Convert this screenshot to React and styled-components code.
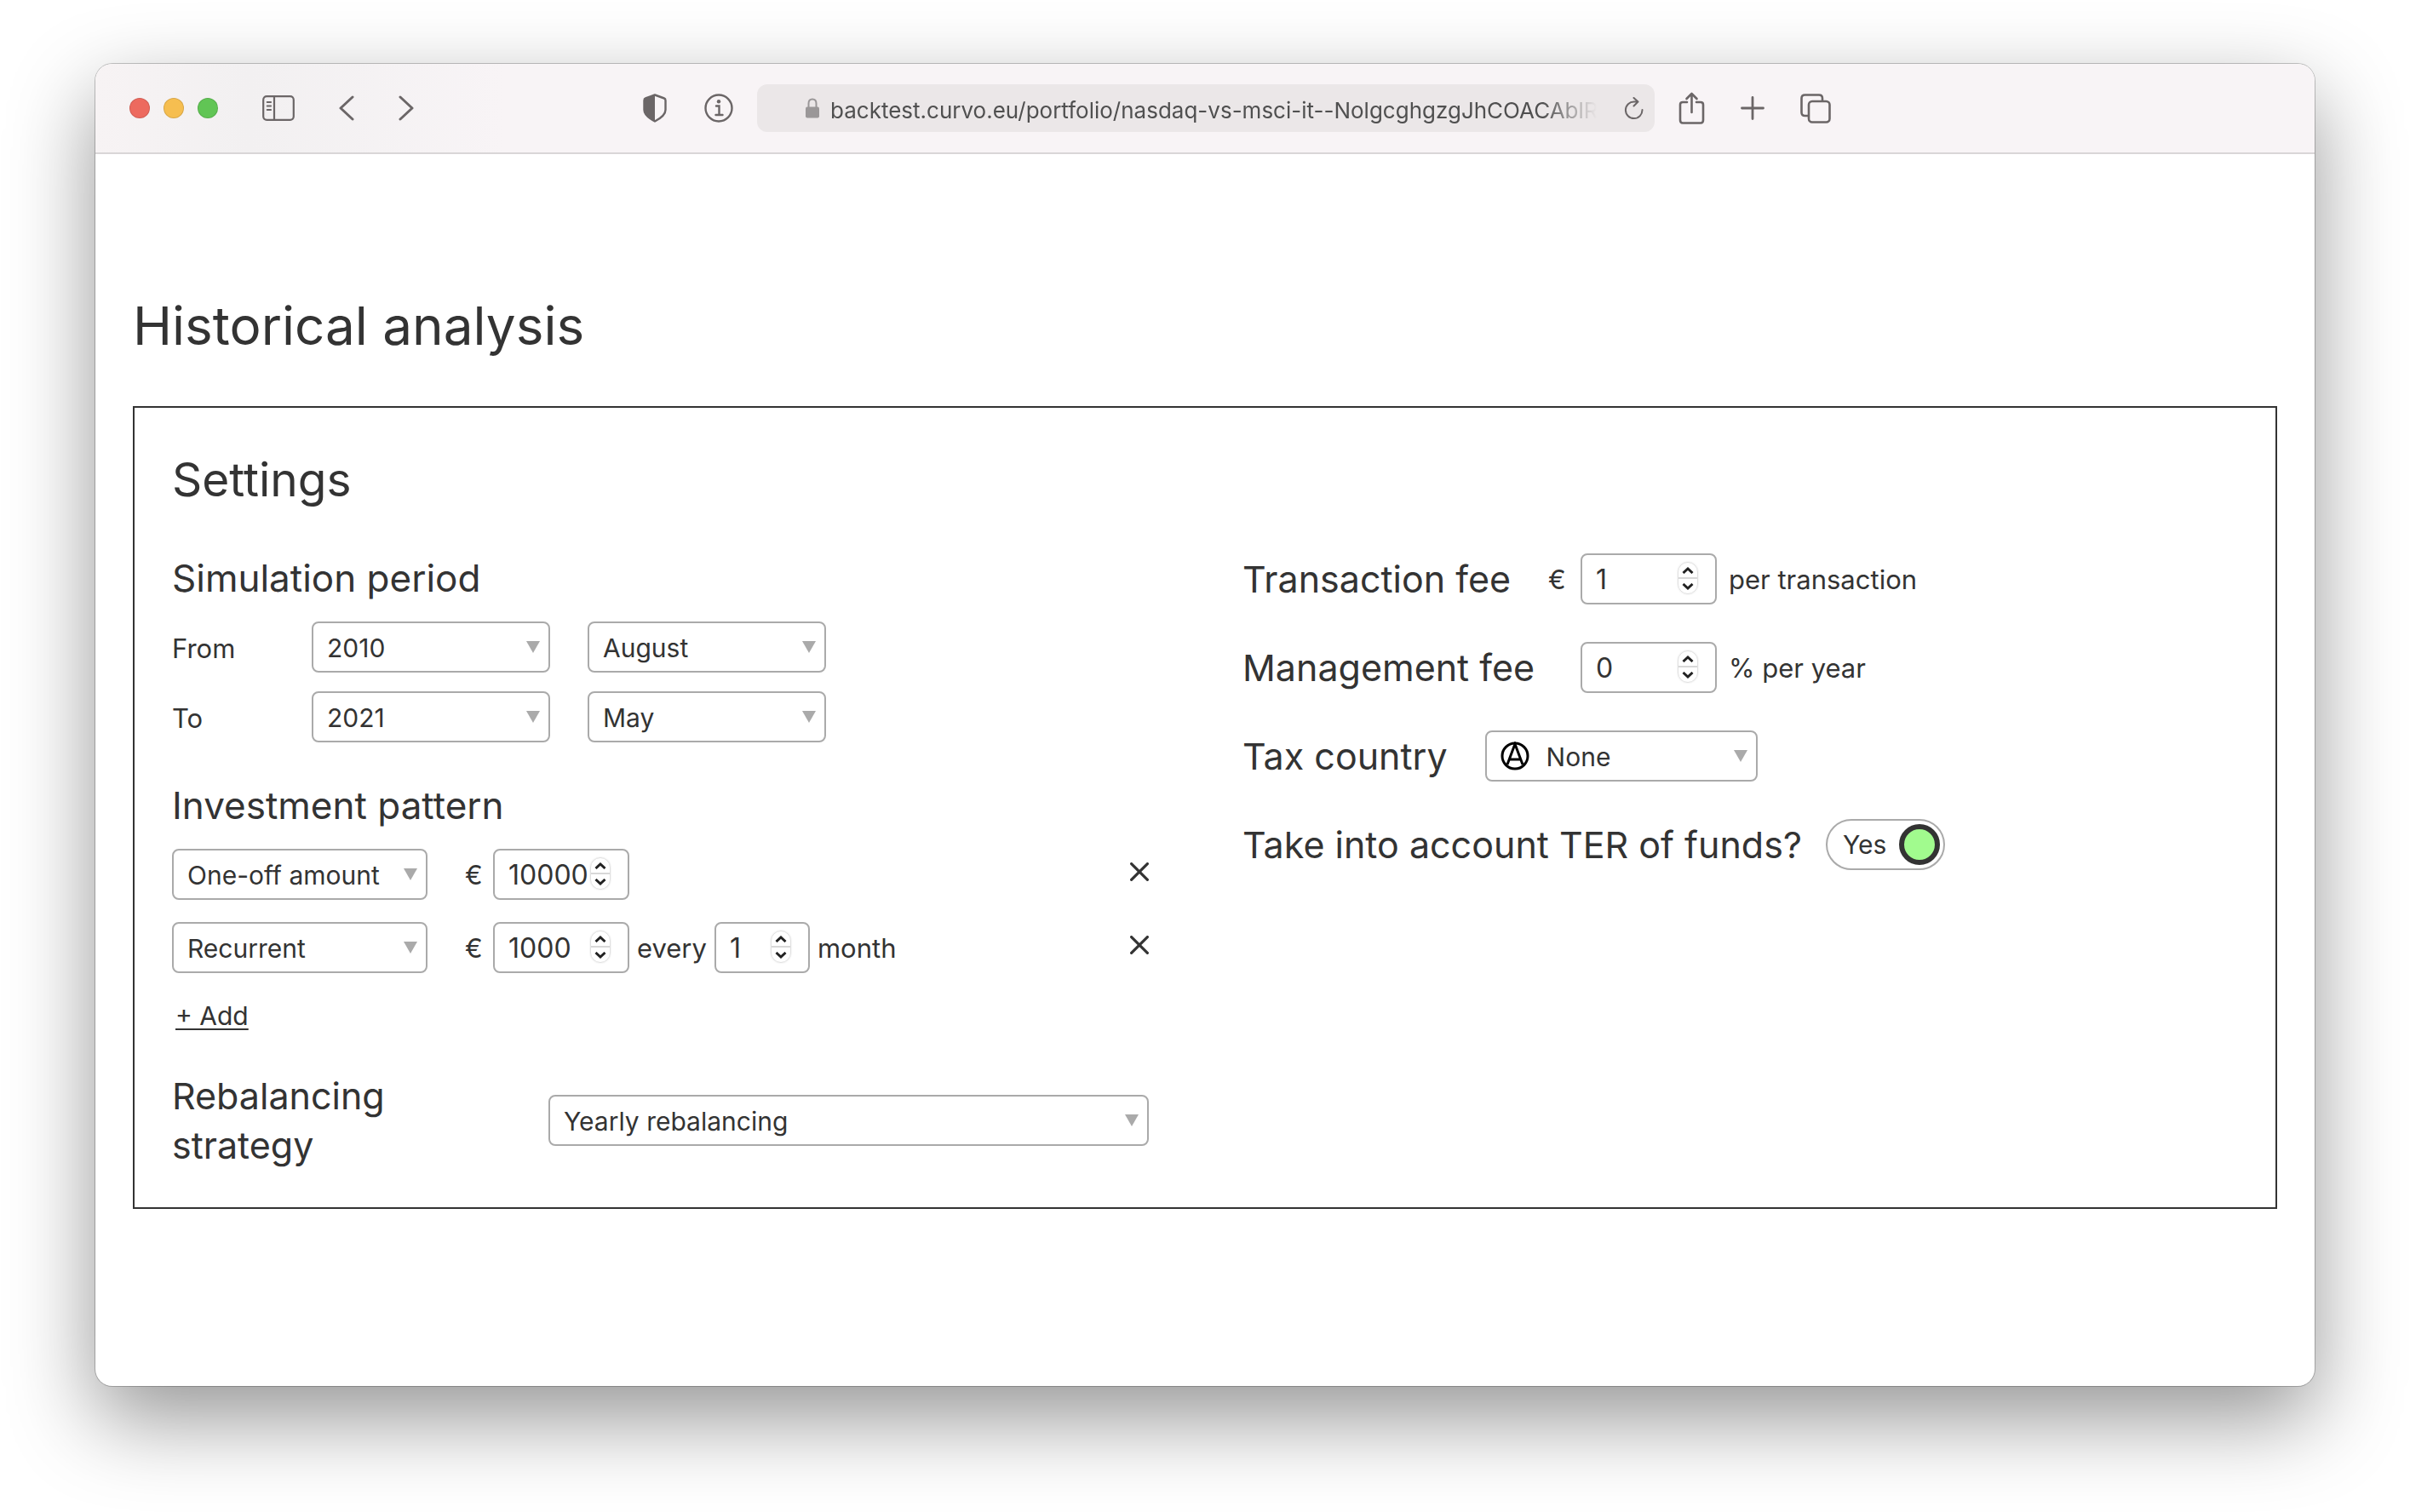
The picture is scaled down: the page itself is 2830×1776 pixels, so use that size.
import React, { useState } from "react";
import styled, { createGlobalStyle } from "styled-components";

const ink = "#333333";
const line = "#aaaaaa";
const chrome = "#6b6667";

const GlobalStyle = createGlobalStyle`
  *, *::before, *::after { box-sizing: border-box; }
  body {
    margin: 0;
    background: #ffffff;
    color: ${ink};
    font-family: Inter, "Liberation Sans", sans-serif;
  }
  button, input, select { font: inherit; color: inherit; margin: 0; }
  button { background: none; border: 0; padding: 0; cursor: pointer; }
`;

const Desktop = styled.div`
  padding: 75px 112px 148px;
  overflow: hidden;
`;

const Window = styled.div`
  border-radius: 20px;
  background: #ffffff;
  box-shadow: 0 0 0 1px rgba(0, 0, 0, 0.22), 0 38px 100px rgba(0, 0, 0, 0.42);
`;

const Toolbar = styled.header`
  display: flex;
  align-items: center;
  height: 106px;
  padding: 0 40px;
  border-bottom: 2px solid #d9d6d7;
  border-radius: 20px 20px 0 0;
  background: linear-gradient(90deg, #f7f3f4 0, #f2f0f1 180px, #f8f4f6 480px);
  color: ${chrome};
`;

const Lights = styled.div`
  display: flex;
  gap: 16px;
`;

const Light = styled.button`
  width: 24px;
  height: 24px;
  border-radius: 50%;
  border: 1px solid rgba(0, 0, 0, 0.12);
  background: ${(p) => p.$color};
`;

const ToolGroup = styled.div`
  display: flex;
  align-items: center;
  gap: ${(p) => p.$gap}px;
  margin-left: ${(p) => p.$before}px;
`;

const Tool = styled.button`
  display: flex;
  color: inherit;
`;

const AddressBar = styled.div`
  display: flex;
  align-items: center;
  flex: 0 1 1054px;
  height: 56px;
  margin-left: 28px;
  padding: 0 12px 0 56px;
  border-radius: 12px;
  background: #ebe7e8;
`;

const Address = styled.input`
  flex: 1;
  min-width: 0;
  height: 48px;
  margin: 0 32px 0 12px;
  padding: 4px 0 0;
  border: 0;
  background: none;
  color: #505050;
  font-size: 26px;
  mask-image: linear-gradient(90deg, #000 calc(100% - 64px), transparent);
`;

const Page = styled.main`
  padding: 160px 44px 208px;
`;

const Title = styled.h1`
  margin: 0 0 52px;
  font-size: 62px;
  font-weight: 400;
  line-height: 84px;
`;

const Panel = styled.section`
  padding: 48px 44px 44px;
  border: 2px solid ${ink};
`;

const PanelTitle = styled.h2`
  margin: 0 0 51px;
  font-size: 55px;
  font-weight: 400;
  line-height: 72px;
`;

const Columns = styled.div`
  display: grid;
  grid-template-columns: 1fr 1fr;
  gap: 88px;
`;

const Column = styled.div`
  display: flex;
  flex-direction: column;
  gap: ${(p) => p.$gap}px;
  padding-right: 22px;
`;

const Group = styled.section`
  display: flex;
  flex-direction: column;
`;

const GroupTitle = styled.h3`
  margin: 0 0 22px;
  font-size: 44px;
  font-weight: 400;
  line-height: 58px;
`;

const FieldLabel = styled.label`
  font-size: 43px;
  line-height: 58px;
`;

const PeriodGrid = styled.div`
  display: grid;
  grid-template-columns: 120px 280px 280px;
  gap: 22px 44px;
  align-items: center;
`;

const Small = styled.label`
  padding-top: 4px;
  font-size: 31px;
  line-height: 40px;
`;

const Text = styled.span`
  padding-top: 2px;
  font-size: 31px;
  line-height: 40px;
`;

const Currency = styled(Text)`
  width: 24px;
`;

const SelectBox = styled.div`
  display: grid;
  align-items: center;
  width: ${(p) => p.$width || "100%"};

  > * { grid-area: 1 / 1; }
  > svg { pointer-events: none; }
`;

const NativeSelect = styled.select`
  appearance: none;
  width: 100%;
  height: 60px;
  padding: 2px 32px 0 ${(p) => (p.$icon ? 70 : 16)}px;
  border: 2px solid ${line};
  border-radius: 8px;
  background: #ffffff;
  font-size: 30px;
`;

const Arrow = styled.svg`
  justify-self: end;
  margin-right: 12px;
`;

const NoCountry = styled.svg`
  margin-left: 18px;
`;

const NumberBox = styled.div`
  display: flex;
  align-items: center;
  justify-content: space-between;
  width: ${(p) => p.$width}px;
  height: 60px;
  padding: 0 20px 0 16px;
  border: 2px solid ${line};
  border-radius: 8px;
`;

const NumberInput = styled.input`
  appearance: textfield;
  flex: 1;
  min-width: 0;
  height: 48px;
  padding: 0;
  border: 0;
  outline: 0;
  background: none;
  font-size: 32px;

  &::-webkit-inner-spin-button { appearance: none; }
`;

const Stepper = styled.div`
  display: flex;
  flex-direction: column;
  width: 24px;
  height: 38px;
  margin-bottom: 2px;
  border: 1px solid #e0e0e0;
  border-radius: 12px;
  box-shadow: 0 0 2px rgba(0, 0, 0, 0.12);

  button {
    display: flex;
    flex: 1;
    align-items: center;
    justify-content: center;
    color: #222222;
  }
  button + button { border-top: 2px solid #d8d8d8; }
`;

const PatternList = styled.div`
  display: flex;
  flex-direction: column;
  gap: 26px;
`;

const PatternRow = styled.div`
  display: flex;
  align-items: center;
`;

const Inline = styled.div`
  display: flex;
  align-items: center;
  gap: ${(p) => p.$gap}px;
  margin-left: ${(p) => p.$before || 0}px;
`;

const Remove = styled.button`
  display: flex;
  margin: 0 0 6px auto;
`;

const AddLink = styled.a`
  align-self: flex-start;
  margin: 30px 0 0 4px;
  color: inherit;
  font-size: 30px;
  line-height: 40px;
  text-decoration: underline;
  text-decoration-thickness: 2px;
  text-underline-offset: 4px;
`;

const StrategyRow = styled.div`
  display: grid;
  grid-template-columns: 398px 1fr;
  gap: 44px;
  align-items: center;
`;

const FeeRow = styled.div`
  display: flex;
  align-items: center;
  min-height: 60px;
  gap: ${(p) => p.$gap}px;
`;

const Switch = styled.label`
  display: flex;
  align-items: center;
  justify-content: space-between;
  width: 140px;
  height: 60px;
  padding: 0 4px 0 18px;
  border: 2px solid ${line};
  border-radius: 30px;
  font-size: 30px;
  cursor: pointer;
`;

const Knob = styled.input`
  appearance: none;
  width: 48px;
  height: 48px;
  border: 6px solid ${ink};
  border-radius: 50%;
  background: #ffffff;

  &:checked { background: #a1fb8e; }
`;

function Select({ label, id, options, width, icon }) {
  return (
    <SelectBox $width={width}>
      <NativeSelect id={id} aria-label={label} $icon={Boolean(icon)}>
        {options.map((o) => (
          <option key={o}>{o}</option>
        ))}
      </NativeSelect>
      {icon}
      <Arrow width="16" height="14" viewBox="0 0 16 14" aria-hidden="true">
        <path d="M0 0H16L8 14Z" fill={line} />
      </Arrow>
    </SelectBox>
  );
}

function NumberField({ label, id, initial, width = 160 }) {
  const [value, setValue] = useState(initial);
  return (
    <NumberBox $width={width}>
      <NumberInput id={id} type="number" aria-label={label} value={value} onChange={(e) => setValue(e.target.value)} />
      <Stepper>
        <button type="button" aria-label="Increase" onClick={() => setValue(Number(value) + 1)}>
          <svg width="14" height="8" viewBox="0 0 14 8" fill="none" stroke="currentColor" strokeWidth="3">
            <path d="M1.5 7L7 2L12.5 7" />
          </svg>
        </button>
        <button type="button" aria-label="Decrease" onClick={() => setValue(Number(value) - 1)}>
          <svg width="14" height="8" viewBox="0 0 14 8" fill="none" stroke="currentColor" strokeWidth="3">
            <path d="M1.5 1L7 6L12.5 1" />
          </svg>
        </button>
      </Stepper>
    </NumberBox>
  );
}

function RemoveButton() {
  return (
    <Remove type="button" aria-label="Remove">
      <svg width="22" height="22" viewBox="0 0 22 22" stroke={ink} strokeWidth="3.2" strokeLinecap="round">
        <path d="M1.6 1.6L20.4 20.4M20.4 1.6L1.6 20.4" />
      </svg>
    </Remove>
  );
}

function BrowserToolbar() {
  return (
    <Toolbar>
      <Lights>
        <Light type="button" aria-label="Close" $color="#ed6a5f" />
        <Light type="button" aria-label="Minimize" $color="#f6be50" />
        <Light type="button" aria-label="Zoom" $color="#61c555" />
      </Lights>
      <ToolGroup $before={52} $gap={52}>
        <Tool type="button" aria-label="Sidebar">
          <svg width="38" height="30" viewBox="0 0 38 30" fill="none" stroke="currentColor" strokeWidth="2.2" strokeLinecap="round">
            <rect x="1.2" y="1.2" width="35.6" height="27.6" rx="4" />
            <path d="M14 1.5V28.5M5.8 8H10M5.8 12.5H10M5.8 17H10" />
          </svg>
        </Tool>
        <Tool type="button" aria-label="Back">
          <svg width="18" height="30" viewBox="0 0 18 30" fill="none" stroke="currentColor" strokeWidth="3" strokeLinecap="round" strokeLinejoin="round">
            <path d="M16 2L2 15L16 28" />
          </svg>
        </Tool>
        <Tool type="button" aria-label="Forward">
          <svg width="18" height="30" viewBox="0 0 18 30" fill="none" stroke="currentColor" strokeWidth="3" strokeLinecap="round" strokeLinejoin="round">
            <path d="M2 2L16 15L2 28" />
          </svg>
        </Tool>
      </ToolGroup>
      <ToolGroup $before={269} $gap={44}>
        <Tool type="button" aria-label="Privacy report">
          <svg width="28" height="34" viewBox="0 0 28 34">
            <path d="M14 1.500L25 5.500Q26.500 6 26.500 8V19Q26.500 26 14 32.500Q1.500 26 1.500 19V8Q1.500 6 3 5.500Z" fill="none" stroke="currentColor" strokeWidth="2.4" strokeLinejoin="round" />
            <path d="M14 1.500V32.500Q1.500 26 1.500 19V8Q1.500 6 3 5.500Z" fill="currentColor" />
          </svg>
        </Tool>
        <Tool type="button" aria-label="Page info">
          <svg width="34" height="34" viewBox="0 0 34 34" fill="none" stroke="currentColor" strokeWidth="2.4" strokeLinecap="round">
            <circle cx="17" cy="17" r="15.5" />
            <path d="M14 14.5H17.5V25M13.5 25H21.5" />
            <circle cx="17" cy="9.2" r="2.2" fill="currentColor" stroke="none" />
          </svg>
        </Tool>
      </ToolGroup>
      <AddressBar>
        <svg width="18" height="24" viewBox="0 0 18 24" aria-hidden="true">
          <path d="M4.5 11V6.5Q4.5 1.5 9 1.5T13.5 6.5V11" fill="none" stroke="#9a9798" strokeWidth="2" />
          <rect x="1" y="10.5" width="16" height="13" rx="2" fill="#9a9798" />
        </svg>
        <Address aria-label="Address" readOnly value="backtest.curvo.eu/portfolio/nasdaq-vs-msci-it--NolgcghgzgJhCOACAblRB" />
        <Tool type="button" aria-label="Reload">
          <svg width="24" height="27" viewBox="0 0 24 27" fill="none" stroke="currentColor" strokeWidth="2" strokeLinecap="round" strokeLinejoin="round">
            <path d="M21.5 15A9.8 9.8 0 1 1 12 5.5H16M11.5 1L16.5 5.5L11.5 10.5" />
          </svg>
        </Tool>
      </AddressBar>
      <ToolGroup $before={28} $gap={42}>
        <Tool type="button" aria-label="Share">
          <svg width="31" height="38" viewBox="0 0 31 38" fill="none" stroke="currentColor" strokeWidth="2.6" strokeLinecap="round" strokeLinejoin="round">
            <path d="M10 12H5Q2 12 2 15V33Q2 36.500 5 36.500H26Q29 36.500 29 33V15Q29 12 26 12H21M15.500 24V2M9.500 8L15.500 2L21.500 8" />
          </svg>
        </Tool>
        <Tool type="button" aria-label="New tab">
          <svg width="28" height="28" viewBox="0 0 28 28" stroke="currentColor" strokeWidth="2.8" strokeLinecap="round">
            <path d="M14 1.5V26.5M1.5 14H26.5" />
          </svg>
        </Tool>
        <Tool type="button" aria-label="Tab overview">
          <svg width="36" height="35" viewBox="0 0 36 35" fill="none" stroke="currentColor" strokeWidth="2.6" strokeLinejoin="round">
            <rect x="10" y="9" width="24.5" height="24.5" rx="4" />
            <path d="M10 26H5.5Q1.5 26 1.5 22V5.5Q1.5 1.5 5.5 1.5H22Q26 1.5 26 5.5V9" />
          </svg>
        </Tool>
      </ToolGroup>
    </Toolbar>
  );
}

export default function App() {
  return (
    <>
      <GlobalStyle />
      <Desktop>
        <Window>
          <BrowserToolbar />
          <Page>
            <Title>Historical analysis</Title>
            <Panel>
              <PanelTitle>Settings</PanelTitle>
              <Columns>
                <Column $gap={45}>
                  <Group>
                    <GroupTitle>Simulation period</GroupTitle>
                    <PeriodGrid>
                      <Small htmlFor="from-year">From</Small>
                      <Select id="from-year" options={["2010"]} />
                      <Select label="From month" options={["August"]} />
                      <Small htmlFor="to-year">To</Small>
                      <Select id="to-year" options={["2021"]} />
                      <Select label="To month" options={["May"]} />
                    </PeriodGrid>
                  </Group>
                  <Group>
                    <GroupTitle>Investment pattern</GroupTitle>
                    <PatternList>
                      <PatternRow>
                        <Select label="First pattern" width="300px" options={["One-off amount", "Recurrent"]} />
                        <Inline $gap={9} $before={44}>
                          <Currency>€</Currency>
                          <NumberField label="One-off amount in euro" initial="10000" />
                        </Inline>
                        <RemoveButton />
                      </PatternRow>
                      <PatternRow>
                        <Select label="Second pattern" width="300px" options={["Recurrent", "One-off amount"]} />
                        <Inline $gap={9} $before={44}>
                          <Currency>€</Currency>
                          <NumberField label="Recurrent amount in euro" initial="1000" />
                          <Text>every</Text>
                          <NumberField label="Interval in months" initial="1" width={112} />
                          <Text>month</Text>
                        </Inline>
                        <RemoveButton />
                      </PatternRow>
                    </PatternList>
                    <AddLink href="#add">+ Add</AddLink>
                  </Group>
                  <StrategyRow>
                    <FieldLabel htmlFor="strategy">Rebalancing strategy</FieldLabel>
                    <Select id="strategy" options={["Yearly rebalancing"]} />
                  </StrategyRow>
                </Column>
                <Column $gap={44}>
                  <FeeRow $gap={44}>
                    <FieldLabel htmlFor="transaction-fee">Transaction fee</FieldLabel>
                    <Inline $gap={14}>
                      <Currency>€</Currency>
                      <NumberField id="transaction-fee" initial="1" />
                      <Text>per transaction</Text>
                    </Inline>
                  </FeeRow>
                  <FeeRow $gap={54}>
                    <FieldLabel htmlFor="management-fee">Management fee</FieldLabel>
                    <Inline $gap={14}>
                      <NumberField id="management-fee" initial="0" />
                      <Text>% per year</Text>
                    </Inline>
                  </FeeRow>
                  <FeeRow $gap={44}>
                    <FieldLabel htmlFor="tax-country">Tax country</FieldLabel>
                    <Select
                      id="tax-country"
                      width="320px"
                      options={["None"]}
                      icon={
                        <NoCountry width="34" height="34" viewBox="0 0 34 34" fill="none" stroke="#000000" strokeWidth="3" aria-hidden="true">
                          <circle cx="17" cy="17" r="15" />
                          <path d="M8 27L17 3L26 27M10 21H24" />
                        </NoCountry>
                      }
                    />
                  </FeeRow>
                  <FeeRow $gap={28}>
                    <FieldLabel htmlFor="ter">Take into account TER of funds?</FieldLabel>
                    <Switch>
                      Yes
                      <Knob id="ter" type="checkbox" defaultChecked />
                    </Switch>
                  </FeeRow>
                </Column>
              </Columns>
            </Panel>
          </Page>
        </Window>
      </Desktop>
    </>
  );
}
